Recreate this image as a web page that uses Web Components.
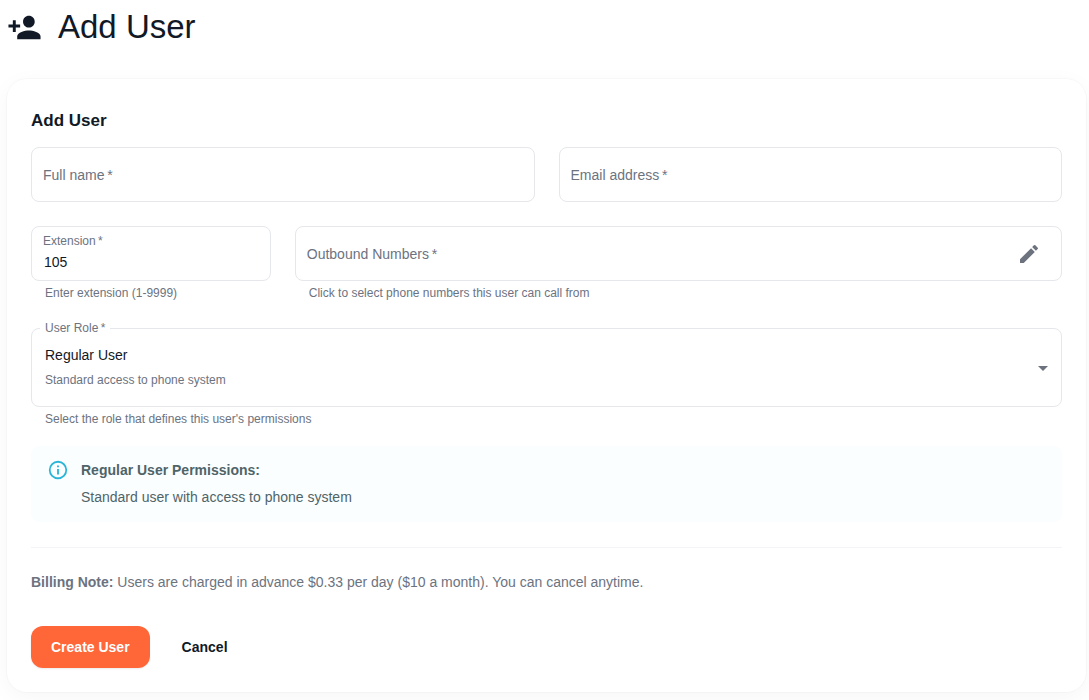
<!DOCTYPE html>
<html lang="en">
<head>
<meta charset="utf-8">
<meta name="viewport" content="width=device-width, initial-scale=1">
<title>Add User</title>
<style>
  body {
    margin: 0;
    background: #fff;
    color: #111927;
    font: 14px/22px "Liberation Sans", Arial, sans-serif;
    --muted: #6c737f;
    --line: #e5e7eb;
    --accent: #ff6638;
  }
</style>
</head>
<body>
<add-user-page></add-user-page>

<script>
class BaseElement extends HTMLElement {
  constructor() {
    super();
    this.attachShadow({ mode: "open" });
  }
  render(html) {
    const t = document.createElement("template");
    t.innerHTML = "<style>*{box-sizing:border-box}</style>" + html;
    this.shadowRoot.replaceChildren(t.content.cloneNode(true));
  }
}

/* Page title with the person-add icon */
customElements.define("page-header", class extends BaseElement {
  connectedCallback() {
    this.render(`
      <style>
        :host { display: flex; align-items: center; gap: 16px; }
        svg { width: 35px; height: 35px; fill: currentColor; flex: none; }
        h1 { margin: 0; font-size: 33px; line-height: 40px; font-weight: 400; }
      </style>
      <svg viewBox="0 0 24 24" aria-hidden="true"><path d="M15 12c2.21 0 4-1.79 4-4s-1.79-4-4-4-4 1.79-4 4 1.79 4 4 4zm-9-2V7H4v3H1v2h3v3h2v-3h3v-2H6zm9 4c-2.67 0-8 1.34-8 4v2h16v-2c0-2.66-5.33-4-8-4z"/></svg>
      <h1><slot></slot></h1>`);
  }
});

/* White rounded surface */
customElements.define("surface-card", class extends BaseElement {
  connectedCallback() {
    this.render(`
      <style>
        :host {
          display: block; box-sizing: border-box; padding: 24px; border-radius: 20px; background: #fff;
          box-shadow: 0 5px 22px rgba(0,0,0,.04), 0 0 0 1px rgba(0,0,0,.02);
        }
      </style>
      <slot></slot>`);
  }
});

/* Outlined text field: the label rests in the middle while empty and shrinks once filled */
customElements.define("text-field", class extends BaseElement {
  connectedCallback() {
    const a = n => this.getAttribute(n) || "";
    this.render(`
      <style>
        :host { display: block; min-width: 0; }
        .box {
          position: relative; display: flex; align-items: center; height: 55px;
          border: 1px solid var(--line); border-radius: 8px; background: #fff;
        }
        .box:focus-within { border-color: var(--accent); }
        input {
          flex: 1; min-width: 0; height: 100%; padding: 17px 12px 0; border: 0; outline: 0;
          background: none; color: inherit; font: inherit;
        }
        label {
          position: absolute; left: 11px; top: 16px; color: var(--muted);
          line-height: 22px; pointer-events: none;
        }
        input:focus + label, input:not(:placeholder-shown) + label { top: 3px; font-size: 12px; }
        .help { margin: 3px 0 2px; padding: 0 14px; font-size: 12px; line-height: 18px; color: var(--muted); }
      </style>
      <div class="box">
        <input id="control" type="${a("type") || "text"}" value="${a("value")}" placeholder=" " required ${this.hasAttribute("readonly") ? "readonly" : ""}>
        <label for="control">${a("label")}&thinsp;*</label>
        <slot name="action"></slot>
      </div>
      ${a("help") ? `<p class="help">${a("help")}</p>` : ""}`);
  }
});

customElements.define("edit-button", class extends BaseElement {
  connectedCallback() {
    this.render(`
      <style>
        :host { display: block; margin-right: 12px; }
        button {
          display: flex; padding: 8px; border: 0; border-radius: 50%;
          background: none; color: var(--muted); cursor: pointer;
        }
        svg { width: 24px; height: 24px; fill: currentColor; }
      </style>
      <button type="button" aria-label="Select numbers">
        <svg viewBox="0 0 24 24" aria-hidden="true"><path d="M3 17.25V21h3.75L17.81 9.94l-3.75-3.75L3 17.25zM20.71 7.04c.39-.39.39-1.02 0-1.41l-2.34-2.34a.9959.9959 0 0 0-1.41 0l-1.83 1.83 3.75 3.75 1.83-1.83z"/></svg>
      </button>`);
  }
});

/* Drop-down with a description of the chosen role under its name */
customElements.define("role-select", class extends BaseElement {
  connectedCallback() {
    this.render(`
      <style>
        :host { display: block; }
        .box { position: relative; display: grid; align-items: center; }
        .box > * { grid-area: 1 / 1; }
        select {
          appearance: none; width: 100%; height: 79px; padding: 0 32px 25px 13px;
          border: 1px solid var(--line); border-radius: 8px; outline: 0;
          background: #fff; color: inherit; font: inherit; cursor: pointer;
        }
        select:focus { border-color: var(--accent); }
        label {
          position: absolute; top: -11px; left: 9px; padding: 0 5px; background: #fff;
          font-size: 12px; color: var(--muted);
        }
        .about { align-self: end; padding: 0 14px 16px; font-size: 12px; color: var(--muted); pointer-events: none; }
        svg { justify-self: end; margin-right: 7px; width: 24px; height: 24px; fill: var(--muted); pointer-events: none; }
        .help { margin: 3px 0 2px; padding: 0 14px; font-size: 12px; line-height: 18px; color: var(--muted); }
      </style>
      <div class="box">
        <select id="role" required aria-describedby="about"><option>Regular User</option></select>
        <label for="role">User Role&thinsp;*</label>
        <span class="about" id="about">Standard access to phone system</span>
        <svg viewBox="0 0 24 24" aria-hidden="true"><path d="M7 10l5 5 5-5z"/></svg>
      </div>
      <p class="help">Select the role that defines this user's permissions</p>`);
  }
});

customElements.define("info-alert", class extends BaseElement {
  connectedCallback() {
    this.render(`
      <style>
        :host {
          display: flex; gap: 12px; box-sizing: border-box; padding: 13px 16px 14px;
          border-radius: 8px; background: #fafeff; color: #4f6468;
        }
        svg { width: 22px; height: 22px; fill: #2ab5d8; flex: none; }
        .text { display: grid; gap: 5px; }
      </style>
      <svg viewBox="0 0 24 24" aria-hidden="true"><path d="M11,9H13V7H11M12,20C7.59,20 4,16.41 4,12C4,7.59 7.59,4 12,4C16.41,4 20,7.59 20,12C20,16.41 16.41,20 12,20M12,2A10,10 0 0,0 2,12A10,10 0 0,0 12,22A10,10 0 0,0 22,12A10,10 0 0,0 12,2M11,17H13V11H11V17Z"/></svg>
      <div class="text"><strong><slot name="title"></slot></strong><span><slot></slot></span></div>`);
  }
});

customElements.define("action-button", class extends BaseElement {
  connectedCallback() {
    this.render(`
      <style>
        :host { display: block; }
        button {
          padding: 10px 20px; border: 0; border-radius: 12px; background: none;
          color: inherit; font: inherit; font-weight: 700; cursor: pointer;
        }
        :host([primary]) button { background: var(--accent); color: #fff; box-shadow: 0 1px 2px rgba(0,0,0,.08); }
      </style>
      <button type="button"><slot></slot></button>`);
  }
});

customElements.define("add-user-page", class extends BaseElement {
  connectedCallback() {
    this.render(`
      <style>
        :host { display: block; padding: 7px 3px 8px 7px; }
        page-header { margin-bottom: 32px; }
        h2 { margin: 7px 0 15px; font-size: 17px; line-height: 22px; }
        .fields { display: grid; grid-template-columns: repeat(12, minmax(0, 1fr)); gap: 24px; }
        .half { grid-column: span 6; }
        .quarter { grid-column: span 3; }
        .rest { grid-column: span 9; }
        .full { grid-column: 1 / -1; }
        info-alert { margin-top: 16px; }
        hr { margin: 25px 0 23px; border: 0; border-top: 1px solid #f2f4f7; }
        .note { margin: 0; color: var(--muted); }
        .actions { display: flex; gap: 12px; margin-top: 33px; }
      </style>
      <page-header>Add User</page-header>
      <surface-card>
        <h2>Add User</h2>
        <div class="fields">
          <text-field class="half" label="Full name"></text-field>
          <text-field class="half" label="Email address" type="email"></text-field>
          <text-field class="quarter" label="Extension" value="105" help="Enter extension (1-9999)"></text-field>
          <text-field class="rest" label="Outbound Numbers" readonly help="Click to select phone numbers this user can call from">
            <edit-button slot="action"></edit-button>
          </text-field>
          <role-select class="full"></role-select>
        </div>
        <info-alert>
          <span slot="title">Regular User Permissions:</span>Standard user with access to phone system
        </info-alert>
        <hr>
        <p class="note"><strong>Billing Note:</strong> Users are charged in advance $0.33 per day ($10 a month). You can cancel anytime.</p>
        <div class="actions">
          <action-button primary>Create User</action-button>
          <action-button>Cancel</action-button>
        </div>
      </surface-card>`);
  }
});
</script>
</body>
</html>
